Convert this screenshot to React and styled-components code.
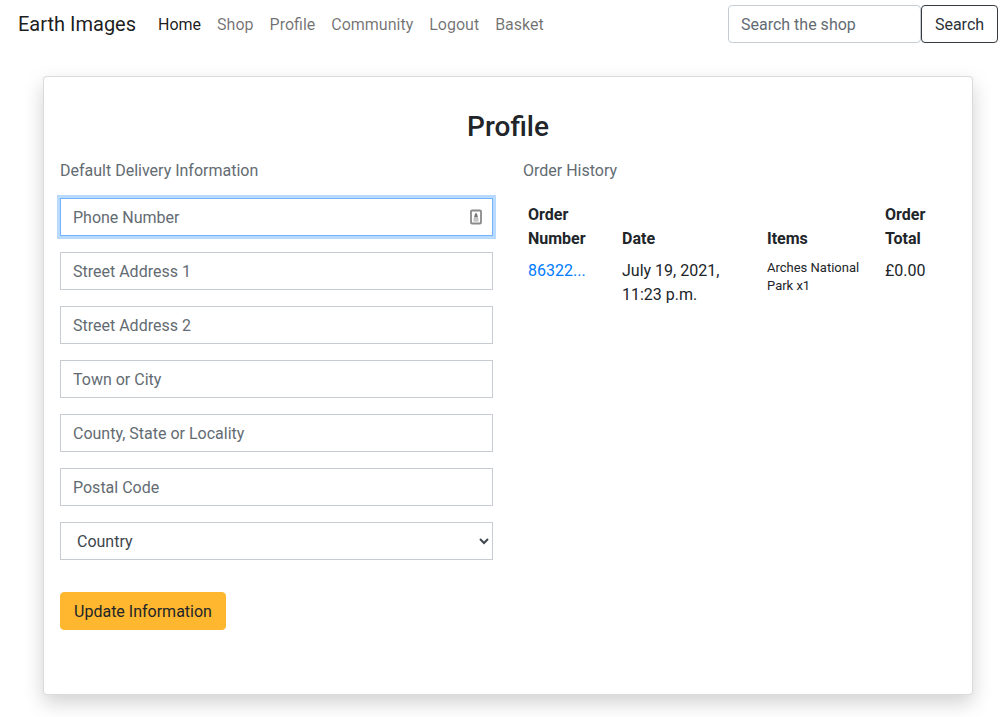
import React from "react";
import styled, { createGlobalStyle, css } from "styled-components";

const GlobalStyle = createGlobalStyle`
  *, *::before, *::after { box-sizing: border-box; }
  body {
    margin: 0;
    background: #fff;
    color: #212529;
    font-family: Roboto, "Liberation Sans", sans-serif;
    font-size: 16px;
    line-height: 24px;
  }
  input, button, select { font: inherit; margin: 0; }
`;

const Page = styled.div`
  padding: 0 0 22px 10px;
`;

const Navbar = styled.nav`
  display: flex;
  align-items: center;
  padding: 5px 8px;
`;

const Brand = styled.a`
  margin-right: 14px;
  font-size: 20px;
  color: rgba(0, 0, 0, 0.9);
  text-decoration: none;
  white-space: nowrap;
`;

const NavList = styled.ul`
  display: flex;
  margin: 0 auto 0 0;
  padding: 0;
  list-style: none;
`;

const NavLink = styled.a`
  display: block;
  padding: 8px 8px 6px;
  color: ${(p) => (p.$active ? "rgba(0, 0, 0, 0.9)" : "rgba(0, 0, 0, 0.56)")};
  text-decoration: none;
`;

const SearchForm = styled.form`
  display: flex;
`;

const control = css`
  height: 38px;
  padding: 6px 12px;
  background: #fff;
  border: 1px solid #c6ccd2;
  color: #40464d;
  &::placeholder { color: #636b72; opacity: 1; }
  &:focus {
    outline: 0;
    border-color: #73b4fb;
    box-shadow: 0 0 0 3px rgba(0, 123, 255, 0.28);
  }
`;

const SearchInput = styled.input`
  ${control}
  width: 193px;
  border-radius: 4px;
`;

const Button = styled.button`
  height: 38px;
  padding: 7px 12px 5px;
  border: 1px solid ${(p) => (p.$outline ? "#343a40" : "#ffb72f")};
  border-radius: 4px;
  background: ${(p) => (p.$outline ? "transparent" : "#ffb72f")};
  color: ${(p) => (p.$outline ? "#2c3137" : "#212529")};
  min-width: ${(p) => (p.$outline ? "77px" : "166px")};
  cursor: pointer;
`;

const Card = styled.main`
  max-width: 930px;
  margin: 28px auto 0;
  padding: 33px 16px 64px;
  background: #fff;
  border: 1px solid rgba(0, 0, 0, 0.14);
  border-radius: 4px;
  box-shadow: 0 8px 20px rgba(0, 0, 0, 0.18);
`;

const Title = styled.h1`
  margin: 0 0 16px;
  font-size: 28px;
  font-weight: 500;
  line-height: 33px;
  text-align: center;
`;

const Columns = styled.div`
  display: grid;
  grid-template-columns: 1fr 1fr;
  gap: 30px;
`;

const SectionLabel = styled.h2`
  margin: 0 0 15px;
  font-size: 16px;
  font-weight: 400;
  line-height: 24px;
  color: #636b72;
`;

const ProfileForm = styled.form`
  display: flex;
  flex-direction: column;
  align-items: flex-start;
  gap: 16px;
`;

const Field = styled.div`
  position: relative;
  width: 100%;
`;

const TextInput = styled.input`
  ${control}
  display: block;
  width: 100%;
  ${(p) =>
    p.$highlighted &&
    css`
      border-color: #73b4fb;
      box-shadow: 0 0 0 3px rgba(0, 123, 255, 0.28);
    `}
`;

const CountrySelect = styled.select`
  ${control}
  display: block;
  width: 100%;
`;

const ContactIcon = styled.svg`
  position: absolute;
  top: 11px;
  right: 11px;
`;

const FormActions = styled.div`
  padding-top: 16px;
`;

const OrdersTable = styled.table`
  width: 100%;
  table-layout: fixed;
  border-collapse: collapse;
`;

const HeadCell = styled.th`
  width: ${(p) => p.$width};
  padding: 5px 5px 3px;
  font-weight: 700;
  text-align: left;
  vertical-align: bottom;
`;

const Cell = styled.td`
  padding: 5px 5px 3px;
  vertical-align: top;
`;

const OrderLink = styled.a`
  color: #007bff;
  text-decoration: none;
`;

const ItemList = styled.ul`
  margin: 0;
  padding: 0;
  list-style: none;
  font-size: 13px;
  line-height: 18px;
`;

const navItems = ["Home", "Shop", "Profile", "Community", "Logout", "Basket"];
const fields = [
  "Phone Number",
  "Street Address 1",
  "Street Address 2",
  "Town or City",
  "County, State or Locality",
  "Postal Code",
];
const orderColumns = [
  ["Order Number", "94px"],
  ["Date", "145px"],
  ["Items", "118px"],
  ["Order Total", "auto"],
];

export default function App() {
  return (
    <>
      <GlobalStyle />
      <Page>
        <Navbar>
          <Brand href="#">Earth Images</Brand>
          <NavList>
            {navItems.map((item) => (
              <li key={item}>
                <NavLink href="#" $active={item === "Home"}>{item}</NavLink>
              </li>
            ))}
          </NavList>
          <SearchForm role="search">
            <SearchInput type="search" placeholder="Search the shop" aria-label="Search the shop" />
            <Button type="submit" $outline>Search</Button>
          </SearchForm>
        </Navbar>
        <Card>
          <Title>Profile</Title>
          <Columns>
            <section>
              <SectionLabel>Default Delivery Information</SectionLabel>
              <ProfileForm>
                {fields.map((name, i) => (
                  <Field key={name}>
                    <TextInput type="text" placeholder={name} aria-label={name} $highlighted={i === 0} />
                    {i === 0 && (
                      <ContactIcon width="12" height="16" viewBox="0 0 12 16" aria-hidden="true">
                        <rect x="1" y="1.5" width="10" height="13" rx="1" fill="#fff" stroke="#8a8a8a" strokeWidth="1.8" />
                        <path d="M6 3.4 7.2 5.4 8 8.6H4l.8-3.2z" fill="#777" />
                        <path d="M3.5 10h5M3.5 11.8h5" stroke="#b4b4b4" strokeWidth="1.3" />
                      </ContactIcon>
                    )}
                  </Field>
                ))}
                <CountrySelect aria-label="Country" defaultValue="">
                  <option value="">Country</option>
                </CountrySelect>
                <FormActions>
                  <Button type="submit">Update Information</Button>
                </FormActions>
              </ProfileForm>
            </section>
            <section>
              <SectionLabel>Order History</SectionLabel>
              <OrdersTable>
                <thead>
                  <tr>
                    {orderColumns.map(([label, width]) => (
                      <HeadCell key={label} scope="col" $width={width}>{label}</HeadCell>
                    ))}
                  </tr>
                </thead>
                <tbody>
                  <tr>
                    <Cell><OrderLink href="#">86322...</OrderLink></Cell>
                    <Cell>July 19, 2021, 11:23 p.m.</Cell>
                    <Cell>
                      <ItemList>
                        <li>Arches National Park x1</li>
                      </ItemList>
                    </Cell>
                    <Cell>£0.00</Cell>
                  </tr>
                </tbody>
              </OrdersTable>
            </section>
          </Columns>
        </Card>
      </Page>
    </>
  );
}
